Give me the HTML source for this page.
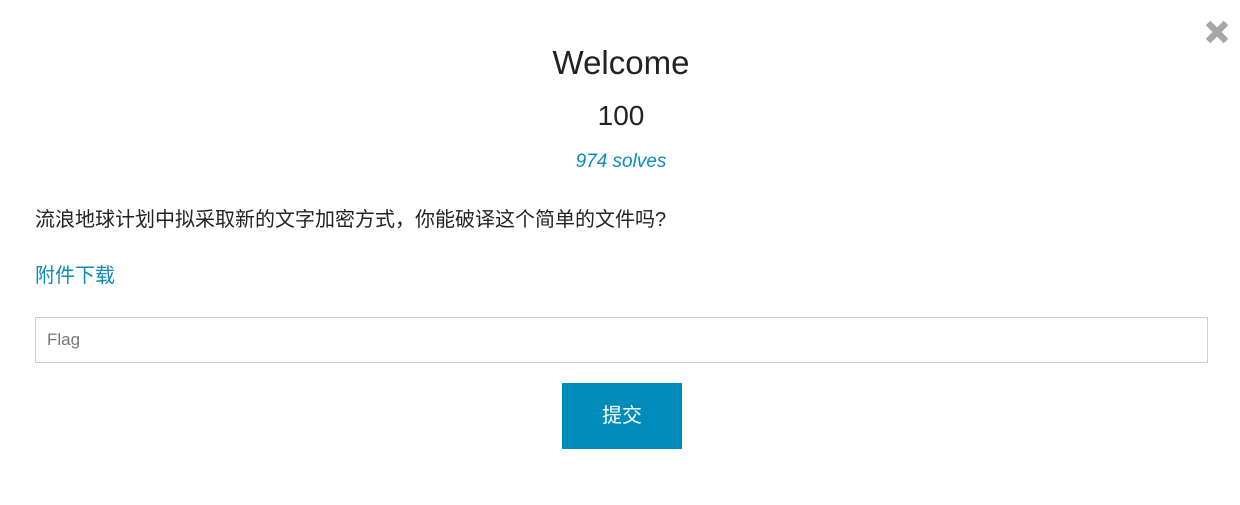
<!DOCTYPE html>
<html><head><meta charset="utf-8"><style>
body{margin:0;width:1240px;height:505px;background:#fff;font-family:"Liberation Sans","Noto Sans CJK SC",sans-serif;color:#222;position:relative;overflow:hidden}
.a{position:absolute;white-space:nowrap}
.c{left:0;width:1242px;text-align:center}
</style></head><body>
<svg class="a" style="left:1204px;top:19px" width="26" height="26" viewBox="0 0 26 26"><path d="M4 4L22 22M22 4L4 22" stroke="#a6a6a6" stroke-width="6.5" stroke-linecap="butt"/></svg>
<div class="a c" style="top:43px;font-size:33px;line-height:40px">Welcome</div>
<div class="a c" style="top:99px;font-size:28px;line-height:34px">100</div>
<div class="a c" style="top:150px;font-size:19px;line-height:24px;font-style:italic;color:#0a8cba">974 solves</div>
<div class="a" style="left:35px;top:207px;font-size:20px;line-height:26px">流浪地球计划中拟采取新的文字加密方式，你能破译这个简单的文件吗?</div>
<div class="a" style="left:35px;top:263px;font-size:20px;line-height:26px;color:#0a8cba">附件下载</div>
<div class="a" style="left:35px;top:317px;width:1171px;height:44px;border:1px solid #ccc;font-size:17px;line-height:44px;color:#777;box-sizing:content-box"><span style="margin-left:11px">Flag</span></div>
<div class="a" style="left:562px;top:383px;width:120px;height:66px;background:#008cba;color:#fff;font-size:20px;line-height:66px;text-align:center">提交</div>
</body></html>
